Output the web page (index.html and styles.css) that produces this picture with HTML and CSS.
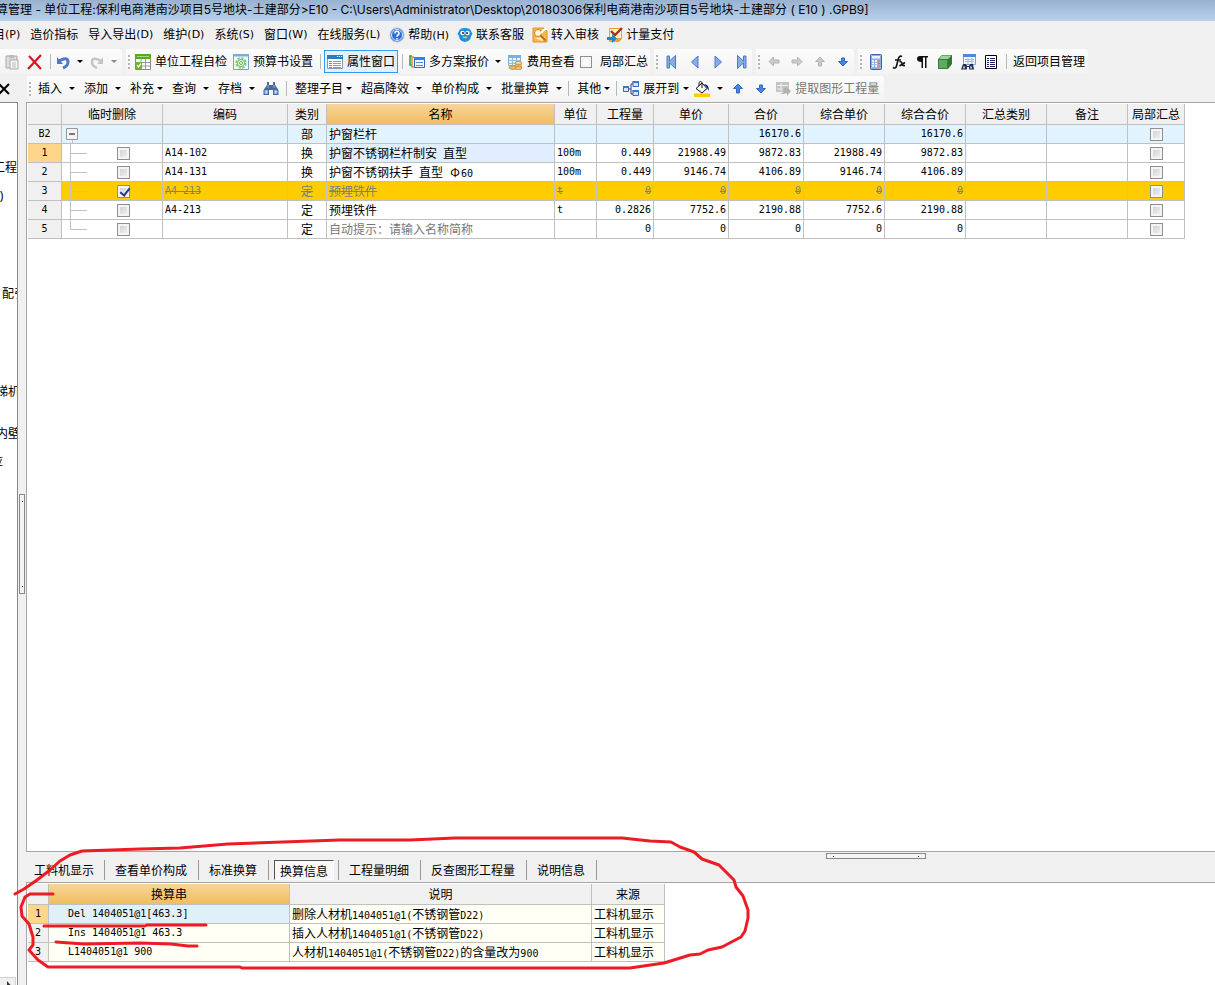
FILE: index.html
```html
<!DOCTYPE html>
<html lang="zh-CN">
<head>
<meta charset="utf-8">
<title>单位工程预算</title>
<link rel="stylesheet" href="styles.css">
</head>
<body>
<div class="app">
<header class="title"><div>算管理<span class="la"> - </span>单位工程<span class="la">:</span>保利电商港南沙项目<span class="la">5</span>号地块<span class="la">-</span>土建部分<span class="la">&gt;E10 - C:\Users\Administrator\Desktop\20180306</span>保利电商港南沙项目<span class="la">5</span>号地块<span class="la">-</span>土建部分<span class="la"> ( E10 ) .GPB9]</span></div></header>
<nav class="menu">
<button class="first">目<span class="la">(P)</span></button><button>造价指标</button><button>导入导出<span class="la">(D)</span></button><button>维护<span class="la">(D)</span></button><button>系统<span class="la">(S)</span></button><button>窗口<span class="la">(W)</span></button><button>在线服务<span class="la">(L)</span></button>
<button class="pic"><svg viewBox="0 0 16 16"><circle cx="8" cy="8" r="7" fill="#2d6fd0" stroke="#b4c4dc"/><circle cx="8" cy="8" r="5.5" fill="none" stroke="#dfeaff"/><path d="M6 6.500a2 2 0 1 1 3 1.500q-1 .6-1 1.800M8 11v1.400" fill="none" stroke="#fff" stroke-width="1.600"/></svg><span>帮助<span class="la">(H)</span></span></button>
<button class="pic"><svg viewBox="0 0 16 16"><path d="M2 4Q3 1 8 1t6 3l1.500 3-1.500 2q0 5-6 6-6-1-6-6L.5 7z" fill="#1d8fe0"/><circle cx="5.500" cy="6" r="2.200" fill="#fff"/><circle cx="10.500" cy="6" r="2.200" fill="#fff"/><circle cx="6" cy="6" r="1" fill="#123"/><circle cx="10" cy="6" r="1" fill="#123"/><path d="M6 10q2 1 4 0" stroke="#fb4" fill="none" stroke-width="1.500"/></svg>联系客服</button>
<button class="pic"><svg viewBox="0 0 16 16"><path d="M1 1h11l3 3v11H1z" fill="#f8b84a" stroke="#dc9428"/><path d="M3 11l7 3 3-4" fill="#fff2c8"/><circle cx="6" cy="6" r="3.500" fill="#fff8d8" stroke="#d98020"/><path d="M8.500 8.500l5 5" stroke="#c8641c" stroke-width="2"/><path d="M9 6l5-5" stroke="#fff" stroke-width="2"/></svg>转入审核</button>
<button class="pic"><svg viewBox="0 0 16 16"><path d="M2 1h13v11l-3 3H2z" fill="#f5a020"/><path d="M3 2h11v9H3z" fill="#fff3cd"/><path d="M4 4l4 4 7-7" fill="none" stroke="#b32c18" stroke-width="2.400"/><path d="M0 10h5V7l5 4.500L5 16v-3H0z" fill="#2583d8"/></svg>计量支付</button>
</nav>

<div class="bars">
<div class="bar">
<div class="group start">
<button class="ico" aria-label="粘贴"><svg viewBox="0 0 16 16"><path d="M2 2h11v12H2z" fill="#ddd" stroke="#aaa"/><path d="M5 1h5v3H5z" fill="#bbb"/><path d="M6 6h8v9H6z" fill="#f6f6f6" stroke="#aaa"/><path d="M8 9h4m-4 2h4m-4 2h4" stroke="#bbb"/></svg></button>
<button class="ico" aria-label="删除"><svg viewBox="0 0 16 16"><path d="M2 2l12 13M14 1L1 15" stroke="#dc1428" stroke-width="2.200"/></svg></button>
<i class="sep"></i>
<button class="ico slim" aria-label="撤销"><svg viewBox="0 0 16 16"><path d="M4 7q9-5 9 1 0 4-5 6" fill="none" stroke="#4a78d0" stroke-width="3"/><path d="M2 3v7h6z" fill="#4a78d0"/></svg></button><button class="drop" aria-label="撤销列表"></button>
<button class="ico slim" aria-label="重做"><svg viewBox="0 0 16 16"><path d="M12 7Q3 2 3 8q0 4 5 6" fill="none" stroke="#c4c4c4" stroke-width="2.500"/><path d="M14 3v7H8z" fill="#c4c4c4"/></svg></button><button class="drop dim" aria-label="重做列表"></button>
</div>
<div class="group"><i class="grip"></i>
<button class="act"><svg viewBox="0 0 16 16"><path d="M.5.500h15v15H.5z" fill="#fff" stroke="#888"/><path d="M0 0h16v5H0z" fill="#5aa827"/><path d="M2 2.500h12" stroke="#a4d878" /><path d="M1 8.500h14M1 12h14M6 5v11M10.500 5v11" stroke="#999"/><path d="M1 8h6v7H1z" fill="#6ab62e"/><path d="M2 11l1.500 2L6 9.500" fill="none" stroke="#fff" stroke-width="1.300"/></svg>单位工程自检</button>
<button class="act"><svg viewBox="0 0 16 16"><path d="M.5.500h15v15H.5z" fill="#f3fbf0" stroke="#6aa2d4"/><path d="M0 0h16v2.500H0z" fill="#79add8"/><circle cx="8" cy="9" r="4.800" fill="none" stroke="#8cc888" stroke-width="2" stroke-dasharray="2.500 1.200"/><circle cx="8" cy="9" r="3.500" fill="none" stroke="#68b862"/><circle cx="8" cy="9" r="1.500" fill="none" stroke="#68b862"/></svg>预算书设置</button>
<i class="sep"></i>
<button class="act on"><svg viewBox="0 0 16 16"><path d="M.5 1.500h15v13H.5z" fill="#fff" stroke="#8c98a4"/><path d="M0 1h16v4H0z" fill="#2380c0"/><path d="M10 2.500h1m1 0h1m1 0h1" stroke="#fff"/><path d="M2 7.500h3m-3 2h3m-3 2h3m-3 2h3" stroke="#58a058"/><path d="M6 7.500h8m-8 2h8m-8 2h8m-8 2h8" stroke="#999"/></svg>属性窗口</button>
<i class="sep"></i>
<button class="act"><svg viewBox="0 0 16 16"><path d="M3 2H1v9h2" fill="none" stroke="#28a028" stroke-width="1.500"/><path d="M5 3H3v10h2" fill="none" stroke="#f08a20" stroke-width="1.500"/><path d="M5.500 3.500h10v10h-10z" fill="#eef6ff" stroke="#2868d0"/><path d="M5 3h11v3H5z" fill="#3e7ce0"/><path d="M7 8.500h7m-7 3h7" stroke="#5c8cdc"/></svg>多方案报价</button><button class="drop mid" aria-label="多方案报价列表"></button>
<button class="act"><svg viewBox="0 0 16 16"><path d="M1.500 1.500h12v10h-12z" fill="#e8f3fd" stroke="#80b0d8"/><path d="M1 1h13v3H1z" fill="#70b4e4"/><path d="M2 6.500h11m-11 3h11M5.500 4v7M9.500 4v7" stroke="#90bce0"/><path d="M8 9h7v5H8z" fill="#e4b860"/><ellipse cx="11.500" cy="9" rx="3.500" ry="1.500" fill="#f8dc98" stroke="#c89840"/><ellipse cx="6" cy="13.500" rx="4" ry="1.800" fill="#e8c070" stroke="#c09040"/><ellipse cx="11.500" cy="14" rx="3.500" ry="1.500" fill="#f0cc80" stroke="#c09040"/></svg>费用查看</button>
<label class="check"><input type="checkbox">局部汇总</label>
</div>
<div class="group"><i class="grip"></i>
<button class="ico" aria-label="首条"><svg viewBox="0 0 16 16"><path d="M3 2v12h2.500V9l6 5.500v-13L5.500 7V2z" fill="#86acea" stroke="#4a78d0"/></svg></button>
<button class="ico" aria-label="上一条"><svg viewBox="0 0 16 16"><path d="M11 2v12L4.500 8z" fill="#86acea" stroke="#4a78d0"/></svg></button>
<button class="ico" aria-label="下一条"><svg viewBox="0 0 16 16"><path d="M5 2v12l6.500-6z" fill="#86acea" stroke="#4a78d0"/></svg></button>
<button class="ico" aria-label="末条"><svg viewBox="0 0 16 16"><path d="M13 2v12h-2.500V9l-6 5.500v-13l6 5.500V2z" fill="#86acea" stroke="#4a78d0"/></svg></button>
</div>
<div class="group"><i class="grip"></i>
<button class="ico" aria-label="左移"><svg viewBox="0 0 16 16"><path d="M3 7.500L7.500 3v3H13v3H7.500v3z" fill="#ccc" stroke="#b4b4b4"/></svg></button>
<button class="ico" aria-label="右移"><svg viewBox="0 0 16 16"><path d="M13 7.500L8.500 3v3H3v3h5.500v3z" fill="#ccc" stroke="#b4b4b4"/></svg></button>
<button class="ico" aria-label="上移"><svg viewBox="0 0 16 16"><path d="M8 3l4.500 4.500h-3V12h-3V7.500h-3z" fill="#ccc" stroke="#b4b4b4"/></svg></button>
<button class="ico" aria-label="下移"><svg viewBox="0 0 16 16"><path d="M8 12l4.500-4.500h-3V4h-3v3.500h-3z" fill="#4884e8" stroke="#3068cc"/></svg></button>
</div>
<div class="group"><i class="grip"></i>
<button class="ico" aria-label="计算器"><svg viewBox="0 0 16 16"><rect x="2.500" y=".5" width="11" height="15" rx="1" fill="#90b0e0" stroke="#3c60a8"/><path d="M4 2h8v2.500H4z" fill="#eef"/><path d="M4 7h8M4 9.500h8M4 12h8" stroke="#fff" stroke-width="1.500" stroke-dasharray="2 1"/><path d="M10 7h2m-2 2.500h2M10 12h2" stroke="#d86070" stroke-width="1.500"/></svg></button>
<button class="ico" aria-label="函数"><svg viewBox="0 0 16 16"><path d="M11 2.500Q8 1 7 6l-1.500 6Q5 15 2 13.500M4 6h6M8.500 8q2-1 2.500 1.500t3 2M14 8.500L8.500 12" fill="none" stroke="#111" stroke-width="1.600"/></svg></button>
<button class="ico" aria-label="段落"><svg viewBox="0 0 16 16"><path d="M4 2h10v1.500h-1.500V14H11V3.500H9V14H7.500V8Q3 8 3 5t3-3z" fill="#111"/></svg></button>
<button class="ico" aria-label="立方体"><svg viewBox="0 0 16 16"><path d="M1 5l4-4h10v9l-4 5H1z" fill="#2e7a32"/><path d="M1.500 5.500h9v9h-9z" fill="#5cab60" stroke="#377e3a"/><path d="M2 5l3-3.500h9.500L11 5z" fill="#9ad49c"/></svg></button>
<button class="ico" aria-label="查找"><svg viewBox="0 0 16 16"><path d="M3.500.5h12v10h-12z" fill="#f2f7ff" stroke="#7ca4dc"/><path d="M3 0h13v3H3z" fill="#5088dc"/><path d="M5 5.500h9m-9 2h9M8 4v6m4-6v6" stroke="#a8bcd8"/><path d="M3 10h3l1 2h2l1-2h3l1 5.500H9V13H7v2.500H1z" fill="#26304c"/><path d="M3 13.500h2m5 0h2" stroke="#a4c0f0" stroke-width="2"/></svg></button>
<button class="ico" aria-label="列表"><svg viewBox="0 0 16 16"><path d="M2.500 1.500h11v13h-11z" fill="#fff" stroke="#000"/><path d="M4 4.500h2m1 0h5m-8 2h2m1 0h5m-8 2h2m1 0h5m-8 2h2m1 0h5m-8 2h2m1 0h5" stroke="#182468"/></svg></button>
<i class="sep"></i><button class="act">返回项目管理</button>
</div>
</div>
<div class="bar second">
<button class="close" aria-label="关闭"><svg viewBox="0 0 10 12"><path d="M-1 1l10 10M9 1L-1 11" stroke="#000" stroke-width="2"/></svg></button>
<div class="group"><i class="grip"></i>
<button class="text">插入<i></i></button><button class="text">添加<i></i></button><button class="text near">补充<i></i></button><button class="text">查询<i></i></button><button class="text">存档<i></i></button>
<button class="ico" aria-label="查找"><svg viewBox="0 0 16 16"><path d="M4 1h2v3h4V1h2v3l3.500 5v5H10V9H6v5H.5V9L4 4z" fill="#4868a0"/><path d="M2 9.500h2.500v3H2zm9.500 0H14v3h-2.500zM5 4v3m6-3v3" fill="#c8dcf4" stroke="#94b4e0"/></svg></button>
<i class="sep"></i>
<button class="text near">整理子目<i></i></button><button class="text">超高降效<i></i></button><button class="text">单价构成<i></i></button><button class="text tail">批量换算<i></i></button>
<i class="sep"></i><button class="text near tail">其他<i></i></button><i class="sep"></i>
<button class="act"><svg viewBox="0 0 16 16"><path d="M5 8h3M8 3v10M8 3h2m-2 10h2" fill="none" stroke="#345" /><path d="M.5 5.500h5v5h-5zm9.500-5h5.500v5H10zm0 9h5.500v5H10z" fill="#d8e8fc" stroke="#3468b8"/><path d="M0 5h6v2H0zm9.500-5H16v2H9.500zm0 9H16v2H9.500z" fill="#3a78d0"/></svg>展开到</button><button class="drop tight" aria-label="展开列表"></button>
<button class="ico" aria-label="填充颜色"><svg viewBox="0 0 16 16"><path d="M0 12.500h16V16H0z" fill="#ffcc00"/><path d="M2 7.500L8 2l5 5.500L8 12z" fill="#f6f6f6" stroke="#111"/><path d="M5 5V1.500q1.500-2 3 0V7" fill="none" stroke="#111"/><path d="M10 3q5 0 5 7l-2-3z" fill="#182c88"/></svg></button><button class="drop short" aria-label="颜色列表"></button>
<button class="ico" aria-label="上移"><svg viewBox="0 0 16 16"><path d="M8 3l4.500 4.500h-3V12h-3V7.500h-3z" fill="#4884e8" stroke="#3068cc"/></svg></button>
<button class="ico" aria-label="下移"><svg viewBox="0 0 16 16"><path d="M8 12l4.500-4.500h-3V4h-3v3.500h-3z" fill="#4884e8" stroke="#3068cc"/></svg></button>
<button class="act dim" disabled><svg viewBox="0 0 16 16"><path d="M1 1h13v10H1z" fill="#c4c4c4"/><path d="M2 4.500h11M2 8h6M6 2v8" stroke="#eee"/><path d="M4 12q5 1 5-3h-2l4-3 5 4-4 5v-3q-4 2-8 0" fill="#b2b2b2"/></svg>提取图形工程量</button>
</div>
</div>
</div>

<main class="work">
<aside class="side">
<div class="tree"><span class="r1">工程</span><span class="r3">0)</span><span class="r10">配引</span><span class="r17">梯机</span><span class="r20">内壁</span><span class="r22">应</span></div>
<button class="scroll" aria-label="向右滚动"><svg viewBox="0 0 16 8"><path d="M7 3l3.500 4v1H7z" fill="#333"/></svg></button>
</aside>
<div class="split"><i class="handle"></i></div>
<div class="right">
<section class="sheet">
<table class="grid">
<colgroup><col class="w34"><col class="w101"><col class="w125"><col class="w39"><col class="w228"><col class="w42"><col class="w57"><col class="w75"><col class="w75"><col class="w81"><col class="w81"><col class="w81"><col class="w81"><col class="w57"></colgroup>
<thead><tr><th></th><th>临时删除</th><th>编码</th><th>类别</th><th class="hot">名称</th><th>单位</th><th>工程量</th><th>单价</th><th>合价</th><th>综合单价</th><th>综合合价</th><th>汇总类别</th><th>备注</th><th>局部汇总</th></tr></thead>
<tbody>
<tr class="part"><th class="m">B2</th><td><div class="node"><svg class="root" viewBox="0 0 18 18"><path d="M2.500 3.500h11v11h-11z" fill="#f4f4f4" stroke="#999"/><path d="M5 9h6" stroke="#000"/><path d="M8.500 15v3" stroke="#c0c0c0"/></svg></div></td><td class="m"></td><td class="c">部</td><td>护窗栏杆</td><td></td><td></td><td></td><td class="n">16170.6</td><td></td><td class="n">16170.6</td><td></td><td></td><td class="c"><input type="checkbox" aria-label="汇总 B2"></td></tr>
<tr><th class="m cur">1</th><td><div class="node"><svg viewBox="0 0 18 18"><path d="M.5 0v18M0 9.500h17" stroke="#c0c0c0"/></svg><input type="checkbox" aria-label="删除 1"></div></td><td class="m">A14-102</td><td class="c">换</td><td class="sel">护窗不锈钢栏杆制安<span class="m"> </span>直型</td><td class="m">100m</td><td class="n">0.449</td><td class="n">21988.49</td><td class="n">9872.83</td><td class="n">21988.49</td><td class="n">9872.83</td><td></td><td></td><td class="c"><input type="checkbox" aria-label="汇总 1"></td></tr>
<tr><th class="m">2</th><td><div class="node"><svg viewBox="0 0 18 18"><path d="M.5 0v18M0 9.500h17" stroke="#c0c0c0"/></svg><input type="checkbox" aria-label="删除 2"></div></td><td class="m">A14-131</td><td class="c">换</td><td>护窗不锈钢扶手<span class="m"> </span>直型<span class="m"> </span><span class="phi">Φ</span><span class="m">60</span></td><td class="m">100m</td><td class="n">0.449</td><td class="n">9146.74</td><td class="n">4106.89</td><td class="n">9146.74</td><td class="n">4106.89</td><td></td><td></td><td class="c"><input type="checkbox" aria-label="汇总 2"></td></tr>
<tr class="gone"><th class="m">3</th><td><div class="node"><svg viewBox="0 0 18 18"><path d="M.5 0v18M0 9.500h17" stroke="#c0c0c0"/></svg><input type="checkbox" checked aria-label="删除 3"></div></td><td class="m">A4-213</td><td class="c">定</td><td>预埋铁件</td><td class="m">t</td><td class="n">0</td><td class="n">0</td><td class="n">0</td><td class="n">0</td><td class="n">0</td><td></td><td></td><td class="c"><input type="checkbox" aria-label="汇总 3"></td></tr>
<tr><th class="m">4</th><td><div class="node"><svg viewBox="0 0 18 18"><path d="M.5 0v18M0 9.500h17" stroke="#c0c0c0"/></svg><input type="checkbox" aria-label="删除 4"></div></td><td class="m">A4-213</td><td class="c">定</td><td>预埋铁件</td><td class="m">t</td><td class="n">0.2826</td><td class="n">7752.6</td><td class="n">2190.88</td><td class="n">7752.6</td><td class="n">2190.88</td><td></td><td></td><td class="c"><input type="checkbox" aria-label="汇总 4"></td></tr>
<tr><th class="m">5</th><td><div class="node"><svg viewBox="0 0 18 18"><path d="M.5 0v9.500H17" fill="none" stroke="#c0c0c0"/></svg><input type="checkbox" aria-label="删除 5"></div></td><td class="m"></td><td class="c">定</td><td class="hint">自动提示：请输入名称简称</td><td></td><td class="n">0</td><td class="n">0</td><td class="n">0</td><td class="n">0</td><td class="n">0</td><td></td><td></td><td class="c"><input type="checkbox" aria-label="汇总 5"></td></tr>
</tbody>
</table>
</section>
<section class="detail">
<i class="hhandle"></i>
<div class="tabs"><button>工料机显示</button><button>查看单价构成</button><button>标准换算</button><button class="active"><span>换算信息</span></button><button>工程量明细</button><button>反查图形工程量</button><button>说明信息</button></div>
<div class="list">
<table class="grid cream">
<colgroup><col class="w21"><col class="w241"><col class="w302"><col class="w73"></colgroup>
<thead><tr><th></th><th class="hot">换算串</th><th>说明</th><th>来源</th></tr></thead>
<tbody>
<tr><th class="m cur">1</th><td class="m in pick">Del 1404051@1[463.3]</td><td>删除人材机<span class="m">1404051@1(</span>不锈钢管<span class="m">D22)</span></td><td>工料机显示</td></tr>
<tr><th class="m">2</th><td class="m in">Ins 1404051@1 463.3</td><td>插入人材机<span class="m">1404051@1(</span>不锈钢管<span class="m">D22)</span></td><td>工料机显示</td></tr>
<tr><th class="m">3</th><td class="m in">L1404051@1 900</td><td>人材机<span class="m">1404051@1(</span>不锈钢管<span class="m">D22)</span>的含量改为<span class="m">900</span></td><td>工料机显示</td></tr>
</tbody>
</table>
</div>
<svg class="ink" viewBox="0 0 770 155"><path d="M15 64L24 59L37 50L50 40L60 31L70 25L82 21L140 19L180 18L228 14L340 10L410 10L455 8L622 8L650 11L671 12L680 17L694 22L702 29L719 35L734 50L736 57L743 66L748 80L748 88L745 101L741 107L722 117L708 120L700 124L690 125L664 133L630 138L612 138H242L240 137H48L38 130L29 120L33 115L33 107L29 94L22 86L21 77L25 67L30 64H53M44 96L145 96L147 95L206 95M56 112L84 114L140 113L171 114L188 116H197"/></svg>
</section>
</div>
</main>
</div>
</body>
</html>
```
FILE: styles.css
```css
* { box-sizing: border-box; }
body {
  margin: 0;
  background: #f0f0f0;
  color: #000;
  font: 12px/16px "Noto Sans", "Noto Sans CJK SC", sans-serif;
}
button {
  margin: 0;
  padding: 0;
  border: 0;
  background: none;
  color: inherit;
  font: inherit;
  white-space: nowrap;
}
svg { display: block; flex: none; }
.la { font-family: "DejaVu Sans", sans-serif; font-size: 11px; line-height: 1; white-space: pre; }
.app { display: flex; flex-direction: column; height: 100vh; overflow: hidden; }

.title {
  height: 21px;
  flex: none;
  background: linear-gradient(#98b2d0, #b8d0ea);
  line-height: 20px;
  white-space: nowrap;
  overflow: hidden;
}
.title div { margin-left: -4px; }
.title .la { font-family: Inter, sans-serif; font-size: 12px; }

.menu { display: flex; align-items: center; flex: none; height: 27px; }
.menu button { display: flex; align-items: center; padding: 0 5px; }
.menu .first { margin-left: -12px; }
.menu .pic { gap: 3px; padding: 0 4px; }
.menu svg { width: 16px; height: 16px; }

.bars { display: flex; flex-direction: column; gap: 2px; flex: none; padding: 1px 0; }
.bar { display: flex; gap: 4px; height: 25px; }
.bar.second { gap: 17px; }
.group {
  display: flex;
  align-items: center;
  border-radius: 0 3px 3px 0;
  background: linear-gradient(#fcfcfc, #f3f3f3);
}
.grip {
  width: 2px;
  height: 14px;
  margin: 0 2px;
  background: repeating-linear-gradient(#b4b4b4 0 2px, transparent 2px 4px);
}
.sep { width: 8px; height: 15px; background: linear-gradient(#b8b8b8, #b8b8b8) center / 1px 100% no-repeat; }
.ico { display: flex; justify-content: center; width: 23px; }
.slim { width: 17px; }
.ico svg, .act svg { width: 16px; height: 16px; }
.act { display: flex; align-items: center; gap: 4px; height: 25px; padding: 0 3px; }
.act.on { height: 23px; padding: 0 2px; border: 1px solid #3399f0; background: #e4f0fc; }
.act.dim { color: #777; padding-right: 5px; }
.drop { display: flex; justify-content: center; width: 17px; }
.drop.mid { width: 12px; }
.drop.short { width: 13px; }
.drop.tight { width: 8px; }
.drop::before, .text i {
  content: "";
  border: 3px solid transparent;
  border-top-color: #000;
  border-bottom-width: 0;
}
.drop.dim::before { border-top-color: #888; }
.text { display: flex; align-items: center; padding: 0 4px 0 5px; gap: 7px; }
.text.near { gap: 3px; }
.text.tail { padding-right: 2px; }
.check { display: flex; align-items: center; gap: 8px; padding: 0 2px; }
.close svg { width: 10px; height: 12px; }

input[type="checkbox"] {
  appearance: none;
  width: 13px;
  height: 13px;
  margin: 0;
  flex: none;
  border: 1px solid #8e8f8f;
  background: linear-gradient(135deg, #c8ccd2, #f6f6f6);
  box-shadow: inset 0 0 0 2px #f4f4f4;
}
.check input[type="checkbox"] { width: 12px; height: 12px; background: #fafafa; }
input[type="checkbox"]:checked::before {
  content: "";
  display: block;
  width: 4px;
  height: 8px;
  margin: 0 0 0 4px;
  border: solid #28388c;
  border-width: 0 2px 2px 0;
  transform: rotate(38deg);
}

.work { display: flex; flex: 1; min-height: 0; }
.side {
  display: flex;
  flex-direction: column;
  justify-content: space-between;
  width: 18px;
  flex: none;
  overflow: hidden;
  border: solid #888;
  border-width: 1px 1px 0 0;
  background: #fff;
}
.tree { display: grid; grid-auto-rows: 14px; padding-top: 58px; line-height: 14px; white-space: nowrap; }
.r1 { grid-row: 1; margin-left: -7px; }
.r3 { grid-row: 3; margin-left: -7px; }
.r10 { grid-row: 10; margin-left: 2px; }
.r17 { grid-row: 17; margin-left: -4px; }
.r20 { grid-row: 20; margin-left: -4px; }
.r22 { grid-row: 22; margin-left: -9px; }
.scroll { width: 16px; height: 8px; border: solid #d0d0d0; border-width: 1px 1px 0 0; background: #f0f0f0; }
.scroll svg { width: 16px; height: 8px; }
.split { display: flex; align-items: center; justify-content: center; width: 8px; flex: none; }
.handle, .hhandle {
  display: flex;
  justify-content: space-between;
  border: 1px solid #888;
  background: #f4f4f4;
}
.handle { flex-direction: column; width: 6px; height: 100px; padding: 6px 2px; }
.hhandle { position: absolute; left: 800px; top: 1px; width: 100px; height: 6px; padding: 2px 6px; }
.handle::before, .handle::after, .hhandle::before, .hhandle::after {
  content: "";
  width: 1px;
  height: 1px;
  background: #1a1a90;
}

.right { display: flex; flex-direction: column; flex: 1; min-width: 0; }
.sheet {
  flex: 1;
  min-height: 0;
  padding: 1px;
  border: solid #a5a5aa;
  border-width: 1px 0 1px 1px;
  background: #fff;
}
.grid {
  width: 0;
  table-layout: fixed;
  border-collapse: separate;
  border-spacing: 0;
  font-family: "Noto Sans CJK SC", sans-serif;
  line-height: 18px;
}
.grid th, .grid td {
  height: 19px;
  padding: 0 2px;
  border: solid #c0c0c0;
  border-width: 0 1px 1px 0;
  white-space: nowrap;
  overflow: hidden;
}
.grid th { background: #f0f0f0; font-weight: 400; text-align: center; }
.grid thead th { height: 21px; line-height: 20px; }
.grid thead .hot { background: linear-gradient(#f8d49a, #f0be60); }
.grid .cur { background: #ffd58c; }
.grid .m, .grid .n { font-family: "DejaVu Sans Mono", monospace; font-size: 10px; white-space: pre; }
.grid span.m { line-height: 1; }
.grid .n { text-align: right; }
.grid .c { text-align: center; padding: 0; }
.grid .c input { display: block; margin: 0 auto; }
.grid .part td { background: #e1f3ff; }
.grid .sel { background: #e0eeff; }
.grid .hint { color: #777; }
.grid .gone td { background: #fc0; color: #808080; text-decoration: line-through; }
.phi { display: inline-block; width: 12px; text-align: center; }
.node { display: flex; align-items: center; height: 18px; padding-left: 6px; gap: 29px; }
.node svg { width: 18px; height: 18px; }
.node .root { margin-left: -6px; }
.w34 { width: 34px; }
.w101 { width: 101px; }
.w125 { width: 125px; }
.w39 { width: 39px; }
.w228 { width: 228px; }
.w42 { width: 42px; }
.w57 { width: 57px; }
.w75 { width: 75px; }
.w81 { width: 81px; }
.w21 { width: 21px; }
.w241 { width: 241px; }
.w302 { width: 302px; }
.w73 { width: 73px; }

.detail { position: relative; flex: none; }
.tabs {
  display: flex;
  align-items: center;
  height: 30px;
  padding: 6px 0 0;
  font-family: "Noto Sans CJK SC", sans-serif;
}
.tabs button { height: 20px; padding: 0 11px 0 10px; border-right: 1px solid #999; }
.tabs button:first-child { padding: 0 10px 0 8px; }
.tabs .active { padding: 0 4px 0 5px; }
.tabs .active span {
  display: block;
  padding: 0 5px;
  height: 20px;
  border: 1px solid;
  border-color: #555 #fff #fff #555;
  background: #f8f8f8;
  line-height: 20px;
}
.list {
  height: 103px;
  padding: 1px;
  border: solid #a5a5aa;
  border-width: 1px 0 0 1px;
  background: #fff;
}
.cream td { background: #fffff5; }
.grid .in { padding-left: 19px; }
.grid .pick { background: #dff0f8; }
.ink {
  position: absolute;
  left: -26px;
  bottom: 0;
  width: 770px;
  height: 155px;
  fill: none;
  stroke: #ed1c24;
  stroke-width: 3;
  stroke-linecap: round;
  stroke-linejoin: round;
  pointer-events: none;
}
```
